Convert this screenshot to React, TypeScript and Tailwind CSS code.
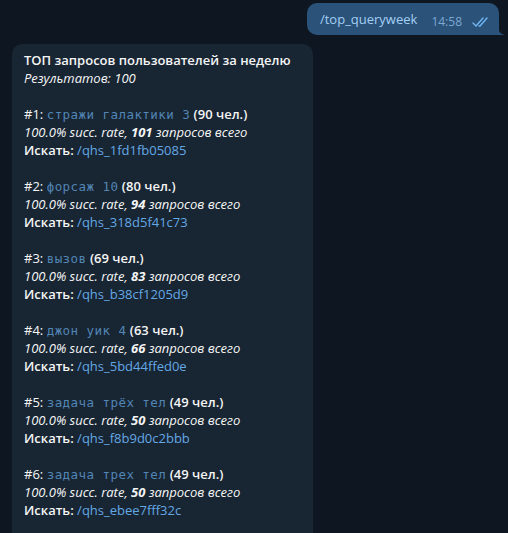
import React from 'react';

type Query = {
  rank: number;
  text: string;
  users: number;
  total: number;
  cmd: string;
};

const queries: Query[] = [
  { rank: 1, text: 'стражи галактики 3', users: 90, total: 101, cmd: '/qhs_1fd1fb05085' },
  { rank: 2, text: 'форсаж 10', users: 80, total: 94, cmd: '/qhs_318d5f41c73' },
  { rank: 3, text: 'вызов', users: 69, total: 83, cmd: '/qhs_b38cf1205d9' },
  { rank: 4, text: 'джон уик 4', users: 63, total: 66, cmd: '/qhs_5bd44ffed0e' },
  { rank: 5, text: 'задача трёх тел', users: 49, total: 50, cmd: '/qhs_f8b9d0c2bbb' },
  { rank: 6, text: 'задача трех тел', users: 49, total: 50, cmd: '/qhs_ebee7fff32c' },
];

const ReadChecks = () => (
  <svg width="18" height="10" viewBox="0 0 18 10" fill="none" stroke="#6fb6f5" strokeWidth="1.4" strokeLinecap="round">
    <path d="M1 6l3 3 7-8" />
    <path d="M7 9l1 0 7-8" />
  </svg>
);

const App: React.FC = () => {
  return (
    <div
      className="w-[508px] h-[533px] overflow-hidden bg-[#0e1621] text-[13px] leading-[18px] text-[#f5f5f5]"
      style={{ fontFamily: '"Open Sans", sans-serif' }}
    >
      <div className="flex justify-end pt-[3px] pr-[9px]">
        <div className="relative flex items-end gap-[14px] bg-[#2b5278] rounded-[10px] rounded-br-none pl-[13px] pr-[9px] pt-[7px] pb-[7px]">
          <span className="text-[#a3cff5]">/top_queryweek</span>
          <span className="flex items-center gap-[10px] text-[12px] text-[#7da8d3] translate-y-[3px]">
            14:58
            <ReadChecks />
          </span>
          <svg className="absolute -right-[6px] bottom-0" width="7" height="9" viewBox="0 0 7 9">
            <path d="M0 0 C0 5 2 8 7 9 L0 9 Z" fill="#2b5278" />
          </svg>
        </div>
      </div>

      <div className="mt-[9px] ml-[12px] w-[301px] bg-[#182533] rounded-t-[10px] px-[12px] pt-[7px] pb-[40px]">
        <div className="font-semibold">ТОП запросов пользователей за неделю</div>
        <div className="italic">Результатов: 100</div>
        {queries.map((q) => (
          <div key={q.rank} className="mt-[18px]">
            <div className="h-[18px]">
              #{q.rank}:{' '}
              <span
                className="text-[#5286b5] text-[12.5px] tracking-[0.45px] leading-[18px] whitespace-pre"
                style={{ fontFamily: '"DejaVu Sans Mono", monospace' }}
              >
                {q.text}
              </span>{' '}
              <span className="font-semibold">({q.users} чел.)</span>
            </div>
            <div className="italic">
              100.0% succ. rate, <span className="font-bold">{q.total}</span> запросов всего
            </div>
            <div>
              <span className="font-semibold">Искать:</span> <span className="text-[#64a8e4]">{q.cmd}</span>
            </div>
          </div>
        ))}
      </div>
    </div>
  );
};

export default App;
